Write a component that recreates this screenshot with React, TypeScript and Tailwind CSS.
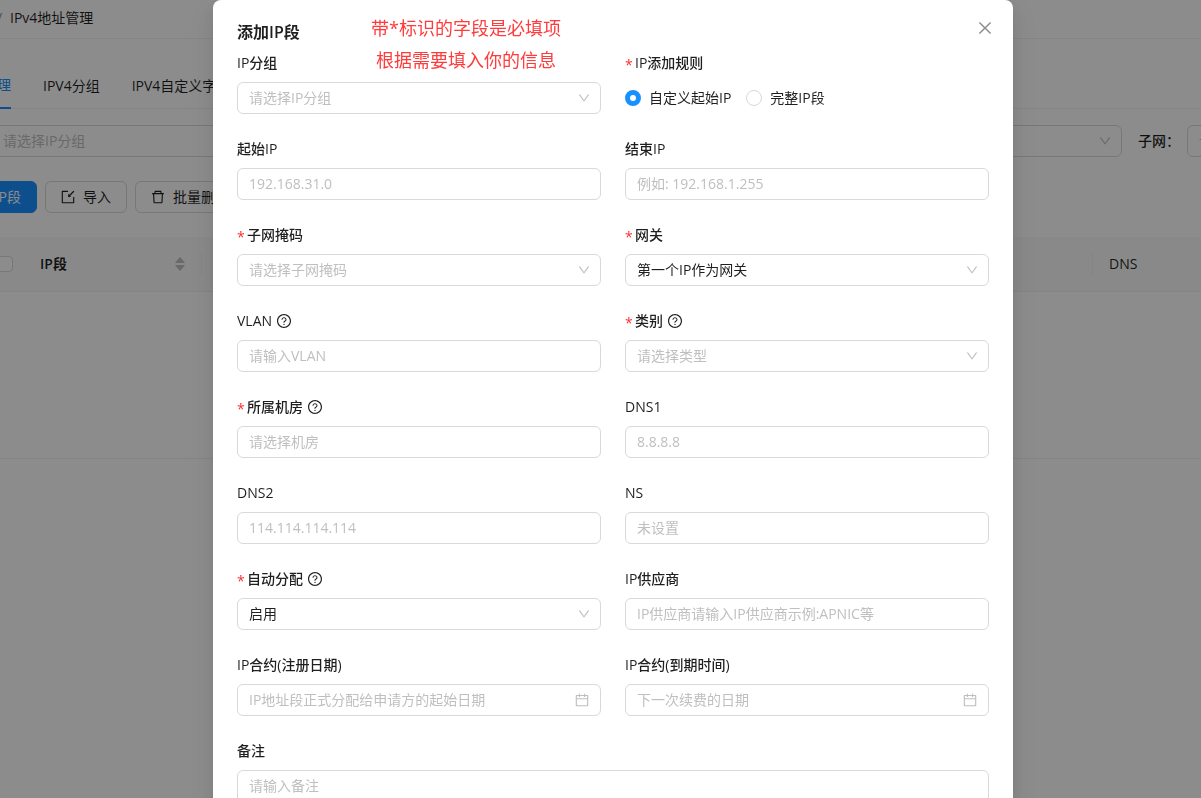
import React, { useId, useState } from 'react';
import {
  AiFillCaretDown,
  AiFillCaretUp,
  AiOutlineCalendar,
  AiOutlineClose,
  AiOutlineDelete,
  AiOutlineDown,
  AiOutlineImport,
  AiOutlineQuestionCircle,
} from 'react-icons/ai';

const controlClass =
  'block w-full h-8 rounded-md border border-[#d9d9d9] bg-white px-[11px] text-sm outline-none placeholder:text-[#bfbfbf] focus:border-[#1890ff]';

interface LabelTextProps {
  label: string;
  required?: boolean;
  help?: boolean;
}

function LabelText({ label, required, help }: LabelTextProps) {
  return (
    <span className="flex items-center h-[22px] mb-2 font-medium">
      {required && (
        <span className="w-1.5 mr-1 pt-1 text-[#ff2d2f]">*</span>
      )}
      {label}
      {help && <AiOutlineQuestionCircle className="ml-1 w-4 h-4" />}
    </span>
  );
}

interface FieldProps extends LabelTextProps {
  className?: string;
  children: (id: string) => React.ReactNode;
}

function Field({ className, children, ...rest }: FieldProps) {
  const id = useId();
  return (
    <div className={className}>
      <label htmlFor={id} className="block">
        <LabelText {...rest} />
      </label>
      {children(id)}
    </div>
  );
}

interface TextFieldProps extends LabelTextProps {
  placeholder: string;
  calendar?: boolean;
}

function TextField({ placeholder, calendar, ...rest }: TextFieldProps) {
  return (
    <Field {...rest}>
      {(id) => (
        <div className="relative">
          <input
            id={id}
            type="text"
            placeholder={placeholder}
            className={`${controlClass} pb-0.5`}
          />
          {calendar && (
            <AiOutlineCalendar className="absolute right-[11px] top-2 w-4 h-4 text-[#bfbfbf] pointer-events-none" />
          )}
        </div>
      )}
    </Field>
  );
}

interface SelectBoxProps {
  id?: string;
  ariaLabel?: string;
  placeholder?: string;
  value?: string;
}

function SelectBox({ id, ariaLabel, placeholder, value }: SelectBoxProps) {
  return (
    <div className="relative w-full">
      <select
        id={id}
        aria-label={ariaLabel}
        className={`${controlClass} appearance-none ${value ? '' : 'text-[#bfbfbf]'}`}
      >
        <option value="">{value ?? placeholder}</option>
      </select>
      <AiOutlineDown className="absolute right-2.5 top-[9px] w-3.5 h-3.5 text-[#bfbfbf] pointer-events-none" />
    </div>
  );
}

function SelectField({
  placeholder,
  value,
  ...rest
}: LabelTextProps & SelectBoxProps) {
  return (
    <Field {...rest}>
      {(id) => <SelectBox id={id} placeholder={placeholder} value={value} />}
    </Field>
  );
}

function AddRuleField() {
  const [rule, setRule] = useState('custom');
  const options = [
    { value: 'custom', text: '自定义起始IP' },
    { value: 'full', text: '完整IP段' },
  ];

  return (
    <fieldset>
      <legend>
        <LabelText label="IP添加规则" required />
      </legend>
      <div className="flex items-center gap-[15px] h-8">
        {options.map((o) => (
          <label key={o.value} className="flex items-center gap-2">
            <input
              type="radio"
              name="rule"
              checked={rule === o.value}
              onChange={() => setRule(o.value)}
              className="appearance-none w-4 h-4 rounded-full border border-[#d9d9d9] bg-white checked:border-[5px] checked:border-[#1890ff]"
            />
            {o.text}
          </label>
        ))}
      </div>
    </fieldset>
  );
}

function AddSegmentModal() {
  return (
    <div className="fixed inset-0 overflow-y-auto [scrollbar-width:none] bg-black/45 pl-[25px]">
      <div
        role="dialog"
        aria-labelledby="modal-title"
        className="relative mx-auto w-full max-w-[800px] rounded-lg bg-white px-6 py-5 shadow-[0_6px_16px_0_rgba(0,0,0,0.08),0_3px_6px_-4px_rgba(0,0,0,0.12),0_9px_28px_8px_rgba(0,0,0,0.05)]"
      >
        <h2 id="modal-title" className="mb-2 text-base leading-6 font-semibold">
          添加IP段
        </h2>
        <button
          type="button"
          aria-label="关闭"
          className="absolute top-[19px] right-[19px] p-0 text-[#8c8c8c]"
        >
          <AiOutlineClose className="w-[18px] h-[18px]" />
        </button>
        <p className="absolute top-3 left-[158px] text-center text-lg leading-8 text-[#ff3b3b]">
          带*标识的字段是必填项
          <br />
          根据需要填入你的信息
        </p>

        <form className="grid grid-cols-2 gap-6">
          <SelectField label="IP分组" placeholder="请选择IP分组" />
          <AddRuleField />
          <TextField label="起始IP" placeholder="192.168.31.0" />
          <TextField label="结束IP" placeholder="例如: 192.168.1.255" />
          <SelectField label="子网掩码" required placeholder="请选择子网掩码" />
          <SelectField label="网关" required value="第一个IP作为网关" />
          <TextField label="VLAN" help placeholder="请输入VLAN" />
          <SelectField label="类别" required help placeholder="请选择类型" />
          <TextField label="所属机房" required help placeholder="请选择机房" />
          <TextField label="DNS1" placeholder="8.8.8.8" />
          <TextField label="DNS2" placeholder="114.114.114.114" />
          <TextField label="NS" placeholder="未设置" />
          <SelectField label="自动分配" required help value="启用" />
          <TextField
            label="IP供应商"
            placeholder="IP供应商请输入IP供应商示例:APNIC等"
          />
          <TextField
            label="IP合约(注册日期)"
            placeholder="IP地址段正式分配给申请方的起始日期"
            calendar
          />
          <TextField
            label="IP合约(到期时间)"
            placeholder="下一次续费的日期"
            calendar
          />
          <Field label="备注" className="col-span-2">
            {(id) => (
              <textarea
                id={id}
                rows={4}
                placeholder="请输入备注"
                className="block w-full rounded-md border border-[#d9d9d9] px-[11px] py-1 leading-[22px] outline-none resize-none placeholder:text-[#bfbfbf] focus:border-[#1890ff]"
              />
            )}
          </Field>
        </form>
      </div>
    </div>
  );
}

const toolbarButton =
  'flex items-center gap-[7px] h-8 rounded-md border whitespace-nowrap';

function AddressPage() {
  return (
    <div className="-mx-24">
      <nav className="flex items-center gap-2 h-[39px] pl-[93px] pb-[3px] border-b border-[#f0f0f0]">
        <span className="w-[5px] text-[#8c8c8c]">/</span>
        <span>IPv4地址管理</span>
      </nav>

      <div className="flex gap-8 h-[70px] pt-6 pl-[21px] border-b border-[#f0f0f0]">
        <a
          href="#address"
          className="flex w-[86px] items-center justify-end whitespace-nowrap text-[#1890ff] border-b-2 border-[#1890ff] -mb-px"
        >
          IPV4地址管理
        </a>
        <a href="#group" className="flex items-center whitespace-nowrap">
          IPV4分组
        </a>
        <a href="#fields" className="flex items-center whitespace-nowrap">
          IPV4自定义字段
        </a>
      </div>

      <div className="flex items-center gap-4 pt-4 pl-[87px]">
        <div className="w-80 shrink-0">
          <SelectBox ariaLabel="IP分组" placeholder="请选择IP分组" />
        </div>
        <SelectBox ariaLabel="机房" placeholder="" />
        <div className="flex shrink-0 items-center">
          <label htmlFor="subnet" className="w-[49px] font-medium">
            子网：
          </label>
          <div className="w-[110px]">
            <SelectBox id="subnet" placeholder="请选择子网" />
          </div>
        </div>
      </div>

      <div className="flex gap-2 pt-6 pl-12">
        <button
          type="button"
          className={`${toolbarButton} w-[85px] px-[15px] justify-end border-[#1890ff] bg-[#1890ff] text-white`}
        >
          添加IP段
        </button>
        <button type="button" className={`${toolbarButton} pl-3.5 pr-[15px] border-[#d9d9d9] bg-white`}>
          <AiOutlineImport className="w-4 h-4" />
          导入
        </button>
        <button type="button" className={`${toolbarButton} pl-3.5 pr-[15px] border-[#d9d9d9] bg-white`}>
          <AiOutlineDelete className="w-4 h-4" />
          批量删除
        </button>
      </div>

      <table className="mt-6 w-full table-fixed text-left">
        <thead className="bg-[#fafafa]">
          <tr className="h-[54px] border-b border-[#f0f0f0]">
            <th className="w-[120px]">
              <input
                type="checkbox"
                aria-label="全选"
                className="block ml-auto mr-[11px] appearance-none w-4 h-4 rounded-sm border border-[#d9d9d9] bg-white"
              />
            </th>
            <th className="w-[178px] pl-4 font-semibold">
              <div className="flex items-center justify-between h-[22px] pr-3.5 border-r border-[#f0f0f0]">
                IP段
                <span className="flex flex-col text-[#bfbfbf]">
                  <AiFillCaretUp className="w-3.5 h-3.5 -mb-1.5" />
                  <AiFillCaretDown className="w-3.5 h-3.5" />
                </span>
              </div>
            </th>
            <th>
              <div className="h-[22px] border-r border-[#f0f0f0]" />
            </th>
            <th className="w-[204px] pl-4 font-medium">DNS</th>
          </tr>
        </thead>
        <tbody>
          <tr className="h-[167px] border-b border-[#f0f0f0]">
            <td colSpan={4} />
          </tr>
        </tbody>
      </table>
    </div>
  );
}

export default function App() {
  return (
    <div className="min-h-screen overflow-hidden bg-white text-sm text-black/88 font-['Open_Sans','Noto_Sans_CJK_SC',sans-serif]">
      <AddressPage />
      <AddSegmentModal />
    </div>
  );
}
